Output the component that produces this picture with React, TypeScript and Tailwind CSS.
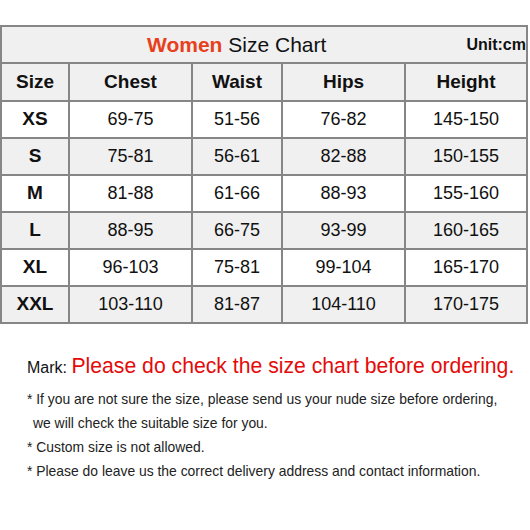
import React from 'react';

type Row = { size: string; chest: string; waist: string; hips: string; height: string };

const rows: Row[] = [
  { size: 'XS', chest: '69-75', waist: '51-56', hips: '76-82', height: '145-150' },
  { size: 'S', chest: '75-81', waist: '56-61', hips: '82-88', height: '150-155' },
  { size: 'M', chest: '81-88', waist: '61-66', hips: '88-93', height: '155-160' },
  { size: 'L', chest: '88-95', waist: '66-75', hips: '93-99', height: '160-165' },
  { size: 'XL', chest: '96-103', waist: '75-81', hips: '99-104', height: '165-170' },
  { size: 'XXL', chest: '103-110', waist: '81-87', hips: '104-110', height: '170-175' },
];

const headers = ['Size', 'Chest', 'Waist', 'Hips', 'Height'];

const notes = [
  '* If you are not sure the size, please send us your nude size before ordering,',
  'we will check the suitable size for you.',
  '* Custom size is not allowed.',
  '* Please do leave us the correct delivery address and contact information.',
];

export default function App() {
  return (
    <div className="w-[530px] h-[530px] bg-white pt-[25px] font-['Liberation_Sans',Arial,sans-serif] text-[#111]">
      <div className="w-[528px] bg-[#868686] border-2 border-[#868686] grid grid-cols-[66px_121px_88px_121px_120px] gap-[2px]">
        <div className="col-span-5 h-[35px] bg-[#f0f0f0] flex items-center">
          <span className="pl-[145px] text-[21px] leading-none">
            <span className="font-bold text-[#e8401c]">Women</span> Size Chart
          </span>
          <span className="ml-auto text-[16px] font-bold leading-none">Unit:cm</span>
        </div>
        {headers.map(h => (
          <div key={h} className="h-[36px] bg-[#f0f0f0] flex items-center justify-center text-[19px] font-bold">
            {h}
          </div>
        ))}
        {rows.map((r, i) => {
          const bg = i % 2 === 0 ? 'bg-white' : 'bg-[#f0f0f0]';
          return (
            <React.Fragment key={r.size}>
              <div className={`h-[35px] ${bg} flex items-center justify-center text-[19px] font-bold`}>{r.size}</div>
              <div className={`h-[35px] ${bg} flex items-center justify-center text-[18px]`}>{r.chest}</div>
              <div className={`h-[35px] ${bg} flex items-center justify-center text-[18px]`}>{r.waist}</div>
              <div className={`h-[35px] ${bg} flex items-center justify-center text-[18px]`}>{r.hips}</div>
              <div className={`h-[35px] ${bg} flex items-center justify-center text-[18px]`}>{r.height}</div>
            </React.Fragment>
          );
        })}
      </div>

      <div className="pl-[27px] pt-[31px]">
        <p className="leading-none whitespace-nowrap">
          <span className="text-[16px]">Mark: </span>
          <span className="text-[21.2px] text-[#e50a0a]">Please do check the size chart before ordering.</span>
        </p>
        <div className="pt-[11px] text-[13.9px] text-[#222] leading-[24px]">
          {notes.map((n, i) => (
            <p key={i} className={`whitespace-nowrap ${i === 1 ? 'pl-[6px]' : ''}`}>{n}</p>
          ))}
        </div>
      </div>
    </div>
  );
}
